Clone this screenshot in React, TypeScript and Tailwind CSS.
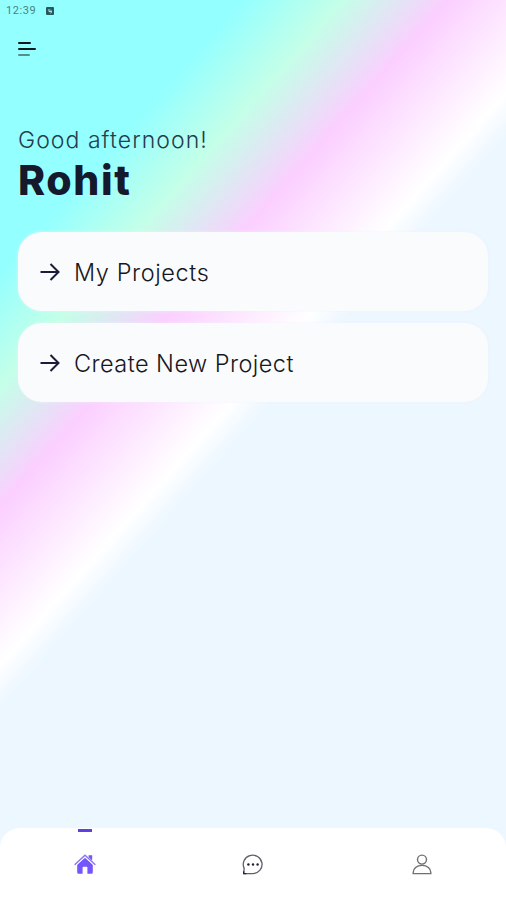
import React from 'react';

function ArrowIcon() {
  return (
    <svg width="20" height="18" viewBox="0 0 20 18" fill="none" stroke="#1b1b3a" strokeWidth="2">
      <path d="M0.5 9H18.5M10.5 1L18.5 9L10.5 17" />
    </svg>
  );
}

function HomeIcon() {
  return (
    <svg className="ml-px" width="22" height="22" viewBox="0 0 22 22" fill="#7456fa">
      <path d="M14.6 2.2H18.2V7.5L14.6 4.2Z" />
      <path d="M11 4.6L18.8 11.6V19.3Q18.8 20.8 17.3 20.8H13.4V14.6Q13.4 13.8 12.6 13.8H9.4Q8.6 13.8 8.6 14.6V20.8H4.7Q3.2 20.8 3.2 19.3V11.6Z" />
      <path d="M1 11.4L11 2.2L21 11.4" fill="none" stroke="#8b72f8" strokeWidth="1.4" strokeLinecap="round" />
      <path d="M2.6 12L11 4.3L19.4 12" fill="none" stroke="#ffffff" strokeWidth="0.8" />
    </svg>
  );
}

function ChatIcon() {
  return (
    <svg className="ml-px" width="22" height="22" viewBox="0 0 22 22" fill="none" stroke="#5f5f68" strokeWidth="1.3">
      <path d="M1.6 19.6L2.2 14.4A9.4 9.2 0 1 1 11 19.6Z" strokeLinejoin="round" />
      <path d="M1.7 17.2V19.6H4.4" stroke="#22224a" />
      <g fill="#1f1f33" stroke="none">
        <circle cx="6.4" cy="10.5" r="1.2" />
        <circle cx="11" cy="10.5" r="1.2" />
        <circle cx="15.6" cy="10.5" r="1.2" />
      </g>
    </svg>
  );
}

function UserIcon() {
  return (
    <svg className="ml-px" width="20" height="22" viewBox="0 0 20 22" fill="none" stroke="#707074" strokeWidth="1.4">
      <circle cx="10" cy="5.6" r="4.5" />
      <path d="M1.2 19.6V18.4C1.2 14.6 4.6 11.4 10 11.4S18.8 14.6 18.8 18.4V19.6Z" />
    </svg>
  );
}

function ActionCard({ label, spacing }: { label: string; spacing: string }) {
  return (
    <button className="flex h-[79px] w-full items-center rounded-3xl bg-[#fafbfc] pl-[22px] text-left shadow-[0_0_3px_rgba(240,240,250,0.8)]">
      <ArrowIcon />
      <span className={`mt-0.5 ml-[14px] whitespace-nowrap text-[23.5px] leading-8 font-light text-[#17171f] ${spacing}`}>
        {label}
      </span>
    </button>
  );
}

export default function App() {
  return (
    <div className="flex h-[900px] w-[506px] flex-col overflow-hidden bg-[linear-gradient(131.5deg,#94ffff_0px,#94ffff_182px,#c4ffe8_256px,#fbcfff_335px,#ffffff_440px,#ecf7ff_470px)] font-['Inter','Liberation_Sans',sans-serif]">
      <div className="flex h-[22px] items-center pl-1.5 font-['Roboto',sans-serif] text-[11px] tracking-[0.6px] text-[#4a8284]">
        <span>12:39</span>
        <svg className="ml-[10px]" width="8" height="8" viewBox="0 0 8 8">
          <rect width="8" height="8" rx="1" fill="#28595c" />
          <path d="M3 2V4.6H5.8M4.4 3L6 4.6L4.4 6.2" stroke="#94ffff" strokeWidth="1" fill="none" />
        </svg>
      </div>

      <header className="mt-5 pl-[18px]">
        <button className="flex flex-col items-start gap-[4px]" aria-label="Menu">
          <span className="h-[2px] w-[13px] rounded-full bg-[#101820]" />
          <span className="h-[2px] w-[18px] rounded-full bg-[#101820]" />
          <span className="h-[2px] w-3 rounded-full bg-[#548e91]" />
        </button>
      </header>

      <main className="flex flex-1 flex-col px-[18px] pt-[68px]">
        <p className="text-[23px] leading-[32px] font-light tracking-[1.05px] text-[#243c4c]">Good afternoon!</p>
        <h1 className="text-[41px] leading-[48px] font-extrabold tracking-[1.6px] text-[#14192b]">Rohit</h1>
        <div className="mt-7 flex flex-col gap-3">
          <ActionCard label="My Projects" spacing="tracking-[0.6px]" />
          <ActionCard label="Create New Project" spacing="tracking-[0.45px]" />
        </div>
      </main>

      <nav className="grid h-[72px] grid-cols-3 rounded-t-[20px] bg-white">
        <button className="flex flex-col items-center" aria-label="Home">
          <span className="mt-px mb-[21px] ml-px h-[3px] w-[14px] bg-[#5f3fe0]" />
          <HomeIcon />
        </button>
        <button className="flex justify-center pt-[26px]" aria-label="Messages">
          <ChatIcon />
        </button>
        <button className="flex justify-center pt-[26px]" aria-label="Profile">
          <UserIcon />
        </button>
      </nav>
    </div>
  );
}
